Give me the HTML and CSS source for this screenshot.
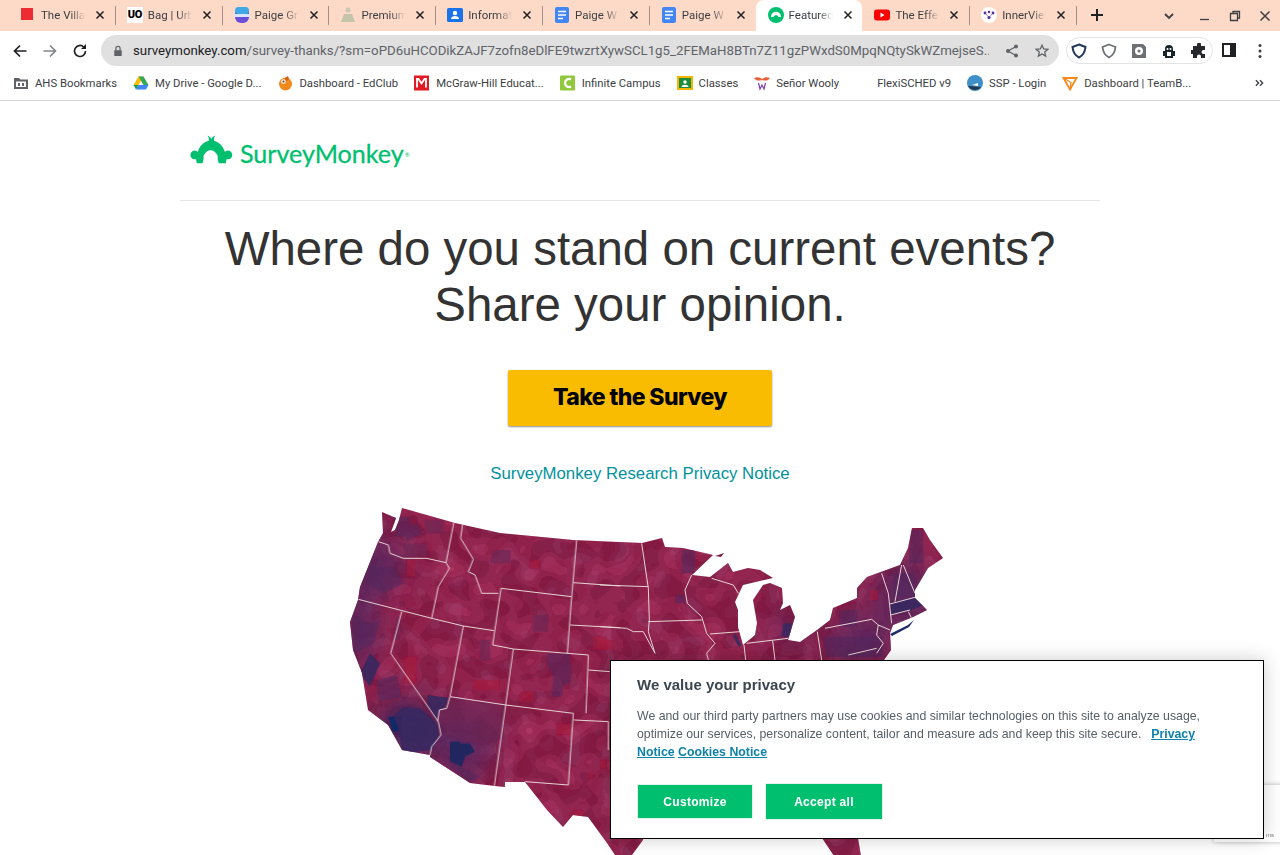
FILE: index.html
```html
<!DOCTYPE html>
<html lang="en">
<head>
<meta charset="utf-8">
<title>SurveyMonkey</title>
<link rel="stylesheet" href="styles.css">
</head>
<body>
<svg class="defs" width="0" height="0">
  <symbol id="x" viewBox="0 0 10 10"><path d="M1.5 1.5l7 7M8.5 1.5l-7 7"/></symbol>
  <symbol id="doc" viewBox="0 0 16 16"><rect x="1" y="0" width="14" height="16" rx="2" fill="#4285f4"/><path d="M4 4.5h8M4 8h8M4 11.500h5" stroke="#fff" stroke-width="1.500"/></symbol>
</svg>

<div class="tabstrip">
  <div class="tab"><svg class="fav" viewBox="0 0 16 16"><rect x="1" y="1" width="12" height="12" fill="#ed2b32"/></svg><span class="title">The Villa</span><svg class="close"><use href="#x"/></svg></div>
  <div class="tab"><span class="fav uo">UO</span><span class="title">Bag | Urban</span><svg class="close"><use href="#x"/></svg></div>
  <div class="tab"><svg class="fav" viewBox="0 0 16 16"><rect x="1" y="0" width="14" height="16" rx="6" fill="#6a4fd8"/><rect x="1" y="0" width="14" height="7" rx="3.500" fill="#3fa9e8"/><rect x="0" y="7" width="16" height="3" fill="#d8e6fa"/></svg><span class="title">Paige Gr</span><svg class="close"><use href="#x"/></svg></div>
  <div class="tab"><svg class="fav" viewBox="0 0 16 16"><circle cx="8" cy="3" r="2.500" fill="#c9c8b4"/><path d="M4 7h8l3 8H1z" fill="#c3c5ab"/></svg><span class="title">Premium</span><svg class="close"><use href="#x"/></svg></div>
  <div class="tab"><svg class="fav" viewBox="0 0 16 16"><rect x="0" y="1" width="16" height="14" rx="1.500" fill="#1a73e8"/><circle cx="8" cy="6" r="2.200" fill="#fff"/><path d="M4 12c0-4 8-4 8 0z" fill="#fff"/></svg><span class="title">Information</span><svg class="close"><use href="#x"/></svg></div>
  <div class="tab"><svg class="fav"><use href="#doc"/></svg><span class="title">Paige W</span><svg class="close"><use href="#x"/></svg></div>
  <div class="tab"><svg class="fav"><use href="#doc"/></svg><span class="title">Paige W</span><svg class="close"><use href="#x"/></svg></div>
  <div class="tab active"><svg class="fav" viewBox="0 0 16 16"><circle cx="8" cy="8" r="8" fill="#00bf6f"/><path d="M3 10c0-7 10-7 10 0l-2.500 0c-.5-2.500-4.500-2.500-5 0z" fill="#fff"/></svg><span class="title">Featured</span><svg class="close"><use href="#x"/></svg></div>
  <div class="tab"><svg class="fav" viewBox="0 0 16 16"><rect x="0" y="2.500" width="16" height="11" rx="3" fill="#f00"/><path d="M6.500 5.500v5l4-2.500z" fill="#fff"/></svg><span class="title">The Effect</span><svg class="close"><use href="#x"/></svg></div>
  <div class="tab"><svg class="fav" viewBox="0 0 16 16"><circle cx="8" cy="8" r="8" fill="#fff"/><circle cx="4" cy="6" r="1.400" fill="#5b2a9d"/><circle cx="12" cy="6" r="1.400" fill="#5b2a9d"/><circle cx="8" cy="5" r="1.200" fill="#5b2a9d"/><circle cx="8" cy="10.500" r="1.500" fill="#5b2a9d"/><path d="M4 6l4 4.500L12 6" stroke="#5b2a9d" fill="none" stroke-width=".6"/></svg><span class="title">InnerView</span><svg class="close"><use href="#x"/></svg></div>
  <svg class="newtab" viewBox="0 0 12 12"><path d="M6 0v12M0 6h12"/></svg>
  <div class="winbtns">
    <svg viewBox="0 0 12 12" class="chev"><path d="M2 4l4 4 4-4"/></svg>
    <svg viewBox="0 0 12 12" class="min"><path d="M1 9.500h9"/></svg>
    <svg viewBox="0 0 12 12" class="res"><path d="M4 3.500V1.500h6.500V8H8.500M1.500 3.500h7v7h-7z"/></svg>
    <svg viewBox="0 0 12 12" class="cls"><path d="M1.500 1.500l9 9M10.500 1.500l-9 9"/></svg>
  </div>
</div>

<div class="toolbar">
  <svg class="nav" viewBox="0 0 16 16"><path d="M14.500 8H2.500M8 2.500L2.500 8 8 13.500"/></svg>
  <svg class="nav off" viewBox="0 0 16 16"><path d="M1.500 8h12M8 2.500L13.500 8 8 13.500"/></svg>
  <svg class="nav" viewBox="0 0 16 16"><path d="M13.500 8a5.500 5.500 0 1 1-1.700-4"/><path class="solid" d="M14 1v5H9z"/></svg>
  <div class="omnibox">
    <svg class="lock" viewBox="0 0 12 14"><path d="M1.500 6h9v7h-9z"/><path class="hollow" d="M3.500 6V4a2.500 2.500 0 0 1 5 0v2"/></svg>
    <div class="url"><span class="host">surveymonkey.com</span>/survey-thanks/?sm=oPD6uHCODikZAJF7zofn8eDlFE9twzrtXywSCL1g5_2FEMaH8BTn7Z11gzPWxdS0MpqNQtySkWZmejseS...</div>
    <svg class="omni-ic" viewBox="0 0 14 14"><circle cx="11" cy="2.500" r="2"/><circle cx="3" cy="7" r="2"/><circle cx="11" cy="11.500" r="2"/><path class="line" d="M11 2.500L3 7l8 4.500"/></svg>
    <svg class="omni-ic star" viewBox="0 0 14 14"><path d="M7 1.200l1.700 3.800 4.100.4-3.100 2.700.9 4L7 10l-3.600 2.100.9-4-3.100-2.700 4.100-.4z"/></svg>
  </div>
  <div class="extbox">
    <svg viewBox="0 0 16 16" class="ext"><path d="M8 1.500l6.500 2.500C14 9 12 12.500 8 14.500 4 12.500 2 9 1.500 4z" fill="#fff" stroke="#23395b" stroke-width="2"/></svg>
    <svg viewBox="0 0 16 16" class="ext"><path d="M8 1.500l6.500 2.500C14 9 12 12.500 8 14.500 4 12.500 2 9 1.500 4z" fill="#fff" stroke="#6d7177" stroke-width="1.800"/></svg>
    <svg viewBox="0 0 16 16" class="ext"><path d="M1 1h11l3 3v11H1z" fill="#6d7072"/><circle cx="8" cy="8" r="4" fill="#fff"/><circle cx="8" cy="8" r="1.500" fill="#6d7072"/></svg>
    <svg viewBox="0 0 16 16" class="ext"><path d="M4 15V6a4 4 0 0 1 8 0v9z" fill="#16252c"/><path d="M2 8h2v5H2zM12 8h2v5h-2z" fill="#16252c"/><circle cx="6.500" cy="6" r="1" fill="#fff"/><circle cx="9.500" cy="6" r="1" fill="#fff"/><rect x="6" y="9" width="4" height="4" fill="#fff"/></svg>
    <svg viewBox="0 0 16 16" class="ext"><path d="M6 1.500a2 2 0 0 1 4 0V3h4v4h-1.500a2 2 0 0 0 0 4H14v4h-4v-1.500a2 2 0 0 0-4 0V15H2v-4H.8a2 2 0 0 1 0-4H2V3h4z" fill="#26282b"/></svg>
  </div>
  <svg class="sidepanel" viewBox="0 0 14 14"><path d="M0 0h14v14H0z" fill="#202124"/><path d="M2 2h6v10H2z" fill="#fff"/></svg>
  <svg class="kebab" viewBox="0 0 4 16"><circle cx="2" cy="2.500" r="1.500"/><circle cx="2" cy="8" r="1.500"/><circle cx="2" cy="13.500" r="1.500"/></svg>
</div>

<div class="bookmarks">
  <div class="bm"><svg class="bic" viewBox="0 0 16 16"><path d="M1 3h5l1.500 1.500H15V14H1z" fill="#5f6368"/><path d="M3 6.500h10V12H3z" fill="#fff"/><path d="M5 8h2v3H5zM9 8h2v3H9z" fill="#5f6368"/></svg>AHS Bookmarks</div>
  <div class="bm"><svg class="bic" viewBox="0 0 16 16"><path d="M5.500 1.500h5L5.500 10H.5z" fill="#fbbc04"/><path d="M10.500 1.500l5 8.500h-5L5.500 1.500z" fill="#34a853"/><path d="M3 14.500L5.500 10h10l-2.500 4.500z" fill="#4285f4"/><path d="M.5 10h5L3 14.500z" fill="#0f9d58"/></svg>My Drive - Google D...</div>
  <div class="bm"><svg class="bic" viewBox="0 0 16 16"><circle cx="8.500" cy="9" r="6.500" fill="#f08a1d"/><path d="M8 3l3-2 1 3-4 3z" fill="#d85f0e"/><circle cx="6.500" cy="6.500" r="2.200" fill="#fff"/><circle cx="6.500" cy="6.500" r="1" fill="#5a2e0c"/></svg>Dashboard - EdClub</div>
  <div class="bm"><svg class="bic" viewBox="0 0 16 16"><rect width="15" height="15" y=".5" fill="#e21a23"/><path d="M3 12.500V4h1.500l3 4.500 3-4.500H12v8.500" fill="none" stroke="#fff" stroke-width="1.800"/></svg>McGraw-Hill Educat...</div>
  <div class="bm"><svg class="bic" viewBox="0 0 16 16"><rect width="15" height="15" y=".5" rx="1" fill="#92c83e"/><path d="M11 4.500a4 4 0 1 0 0 7" fill="none" stroke="#fff" stroke-width="2.200"/></svg>Infinite Campus</div>
  <div class="bm"><svg class="bic" viewBox="0 0 16 16"><rect y="1" width="16" height="14" fill="#f4b400"/><rect x="2" y="3" width="12" height="10" fill="#1e8e3e"/><circle cx="8" cy="7" r="1.700" fill="#fff"/><path d="M4.500 12c0-3 7-3 7 0z" fill="#fff"/></svg>Classes</div>
  <div class="bm"><svg class="bic" viewBox="0 0 16 16"><path d="M0 3c3-1 5-1 8 1 3-2 5-2 8-1-2 3-5 3-8 2-3 1-6 1-8-2z" fill="#e9603a"/><path d="M4.500 8l1.500 6 2-4 2 4 1.500-6" fill="none" stroke="#7a3fa8" stroke-width="1.200"/></svg>Señor Wooly</div>
  <div class="bm"><span class="bic"></span>FlexiSCHED v9</div>
  <div class="bm"><svg class="bic" viewBox="0 0 16 16"><circle cx="8" cy="8" r="8" fill="#3f8fc9"/><path d="M1 11c4 0 9 1 13 1-3 4-10 4-13-1z" fill="#23384d"/><path d="M5 10l6-2v3z" fill="#fff"/></svg>SSP - Login</div>
  <div class="bm"><svg class="bic" viewBox="0 0 16 16"><path d="M1.500 3h13L8 14.500z" fill="none" stroke="#f58a1f" stroke-width="1.800"/><path d="M1.500 3L9 7.500 8 14.500" fill="none" stroke="#f58a1f" stroke-width="1.300"/></svg>Dashboard | TeamB...</div>
  <svg class="more" viewBox="0 0 10 8"><path d="M1 1l3 3-3 3M5.500 1l3 3-3 3"/></svg>
</div>

<main class="page">
  <header class="brand">
    <svg class="mark" viewBox="60 40 130 90"><path d="M80 127l-2-12a13 13 0 1 1 5-22c8-22 20-30 32-32 2-6 0-11-3-16 6 3 9 6 11 11 2-5 5-8 11-11-2 5-4 11-3 16 12 2 24 10 32 32a13 13 0 1 1 5 22l-2 12h-21c-2-8-4-14-3-21-5-12-14-17-21-17s-16 5-21 17c1 7-1 13-3 21z"/></svg>
    <div class="wordmark">SurveyMonkey<span class="reg">®</span></div>
  </header>
  <h1 class="headline">Where do you stand on current events?<br>Share your opinion.</h1>
  <a class="cta">Take the Survey</a>
  <a class="privacy">SurveyMonkey Research Privacy Notice</a>
  <svg class="map" viewBox="340 500 620 355">
    <defs>
      <clipPath id="us"><use href="#land"/><use href="#florida"/></clipPath>
      <filter id="blur" x="-50%" y="-50%" width="200%" height="200%"><feGaussianBlur stdDeviation="14"/></filter>
      <filter id="soft" x="-20%" y="-20%" width="140%" height="140%"><feGaussianBlur stdDeviation=".7"/></filter>
      <filter id="mottleA" x="0" y="0" width="100%" height="100%">
        <feTurbulence type="fractalNoise" baseFrequency=".06" numOctaves="1" seed="4"/>
        <feColorMatrix values="0 0 0 0 .36  0 0 0 0 .14  0 0 0 0 .34  1.500 0 0 0 -.45"/>
        <feComponentTransfer><feFuncA type="discrete" tableValues="0 .08 .2 .35"/></feComponentTransfer>
      </filter>
      <filter id="mottleB" x="0" y="0" width="100%" height="100%">
        <feTurbulence type="fractalNoise" baseFrequency=".05" numOctaves="1" seed="11"/>
        <feColorMatrix values="0 0 0 0 .66  0 0 0 0 .07  0 0 0 0 .20  1.500 0 0 0 -.45"/>
        <feComponentTransfer><feFuncA type="discrete" tableValues="0 .15 .3 .5"/></feComponentTransfer>
      </filter>
      <path id="land" d="M402 508L455 523 500 533 573 540 642 543 662 538 665 547 683 548 713 555 692 575 710 577 728 563 733 572 748 568 760 570 773 578 743 585 735 602 738 610 738 627 743 645 755 635 757 623 753 600 763 585 770 583 782 588 783 603 780 610 790 605 795 617 788 640 800 642 817 630 830 620 833 608 857 598 857 588 867 577 900 565 908 548 912 528 923 528 930 540 943 558 928 568 915 590 915 598 927 610 913 617 893 625 890 633 891 650 884 660 870 700 800 760 660 780 643 840 632 855 615 855 607 843 588 817 573 815 563 827 547 810 525 782 505 782 505 787 495 786 470 783 430 757 430 755 402 750 388 725 368 710 362 673 353 650 350 622 358 600 360 587 378 542 383 533 382 512 396 518 394 524 391 532 395 530 399 520z"/>
      <path id="florida" d="M822 838H858L861 856H834z"/>
    </defs>
    <g clip-path="url(#us)">
      <rect class="base" x="340" y="500" width="620" height="355"/>
      <rect class="tex" x="340" y="500" width="620" height="355" filter="url(#mottleA)"/>
      <rect class="tex" x="340" y="500" width="620" height="355" filter="url(#mottleB)"/>
      <g filter="url(#blur)">
        <ellipse class="bl1" cx="358" cy="615" rx="18" ry="60"/>
        <ellipse class="bl1" cx="382" cy="560" rx="22" ry="26"/>
        <ellipse class="bl2" cx="405" cy="725" rx="24" ry="22"/>
        <ellipse class="bl1" cx="460" cy="745" rx="34" ry="32"/>
        <ellipse class="bl1" cx="905" cy="595" rx="32" ry="32"/>
        <ellipse class="bl1" cx="860" cy="640" rx="34" ry="22"/>
        <ellipse class="bl1" cx="790" cy="630" rx="14" ry="16"/>
      </g>
      <g transform="translate(340 500) scale(.3333)" filter="url(#soft)">
        <path class="p1" d="M160 50h50v60h-40zM190 80l40-10 20 30-50 20z"/>
        <path class="p2" d="M145 650h40l-3 40-22 5z"/>
        <path class="p3" d="M190 620l50 5 50 45 5 40-20 40-90 10-5-60-20-50z"/>
        <path class="p3" d="M262 585l63 8-5 32-22 5-6 30-30-45z"/>
        <path class="p4" d="M330 725h30v5h30l15 25-30 15-10 30-35-15z"/>
        <path class="p1" d="M320 790l45 10 55 30-30 20z"/>
        <path class="p5" d="M300 635l30-45 165 25-5 100-70 20-100-30z"/>
        <path class="p3" d="M60 520l30-60 30 30-30 70z"/>
        <path class="p1" d="M90 200h70l30 50-60 30-50-30z"/>
        <path class="p1" d="M40 340l40 30 40-10-20 70-60 30z"/>
        <path class="p1" d="M110 540l60-15 15 65-70 15z"/>
        <path class="p1" d="M620 460h70v30h5l-5 60-20 5-5 35h-30l5-60-20-40z"/>
        <path class="p5" d="M420 420h30v60l-30 5z"/>
        <path class="p5" d="M580 345h45v50h-45z"/>
        <path class="p5" d="M460 150h50v40h-60z"/>
        <path class="p5" d="M190 130h70v40h-70z"/>
        <path class="p5" d="M255 60h55v40h-55z"/>
        <path class="p5" d="M170 350h12v70h-25z"/>
        <path class="r1" d="M570 180h30v25h-30zM200 180h25v50h-25z"/>
        <path class="r1" d="M190 470h40v80h-35z"/>
        <path class="r1" d="M540 575h40v30h-40zM650 670h40v35h-40zM745 815h15v20h-15zM780 780h20v25h-20z"/>
        <path class="r1" d="M760 410h40v40h-40zM700 930h30v20h-30z"/>
        <path class="r1" d="M400 540h80v30h-80z"/>
      </g>
      <g transform="translate(600 510) scale(.3333)" filter="url(#soft)">
        <path class="p1" d="M245 120h40v70h-40zM225 255h30v25h-30z"/>
        <path class="p3" d="M405 370l20 35-10 5-15-30zM550 340h25v40h-30z"/>
        <path class="p3" d="M870 280l75-20 25 25-35 15-65 15z"/>
        <path class="p1" d="M670 380h180v60H680zM720 300h50v50h-50zM880 190h60v70h-60zM930 60h40v100h-40z"/>
        <path class="r1" d="M0 390h40v30H0zM810 240h25v30h-25z"/>
      </g>
      <g class="lines" transform="translate(340 500) scale(.3333)">
        <path d="M115 125l30 10 5 25 40 15h70l58 13"/>
        <path d="M342 65l-24 123 10 17-33 55-20 95"/>
        <path d="M368 70l-6 45 38 63-15 37 20 10 20 55h50"/>
        <path d="M483 265l212 25M710 120l-15 170-13 170"/>
        <path d="M483 265l-25 170 62 12 225 18-7 175"/>
        <path d="M55 298l220 57 95 23 92 14"/>
        <path d="M185 335l-33 125 143 205 8 40-28 35-5 25"/>
        <path d="M370 378l-40 212 167 25 203 25"/>
        <path d="M330 590l-10 35-22 5-5 35"/>
        <path d="M497 615l-34 243M520 447l-23 168M700 640l-15 215-130-10"/>
        <path d="M702 660l103 5v85M700 248l140 10M690 375l150 8M745 510l65 5"/>
      </g>
      <g class="lines" transform="translate(600 510) scale(.3333)">
        <path d="M125 100l20 135 3 95-3 35 20 65M0 225l145 5M0 350l80 5 20 10h30l35 65"/>
        <path d="M145 335l160-5M275 195l-20 45 7 40 43 40 15 50 25 30-25 30 5 20"/>
        <path d="M335 205l65 20 15 25M330 372l90-7M432 405l5 45M518 392l7 58M440 400l125-15M652 365l13 85"/>
        <path d="M675 355l140-27 20 17 35 15M835 345l-5 30 20 25-20 30M845 190l20 60 10 90"/>
        <path d="M905 165l-20 110M910 165l35 85M870 282l75-20M872 315l58-15M925 305l10 20M745 435l85-20"/>
      </g>
    </g>
    <path class="li" d="M890 634l18-9 6-5-5 7-17 9z"/>
    <path class="isl" d="M715 556l9-3-3 4z"/>
  </svg>
</main>

<aside class="recaptcha"><span class="rc">ms</span></aside>

<section class="consent">
  <h2 class="c-title">We value your privacy</h2>
  <p class="c-text">We and our third party partners may use cookies and similar technologies on this site to analyze usage, optimize our services, personalize content, tailor and measure ads and keep this site secure. &nbsp;<a class="first">Privacy Notice</a> <a>Cookies Notice</a></p>
  <div class="c-btns"><button class="c-btn">Customize</button><button class="c-btn accept">Accept all</button></div>
</section>
</body>
</html>
```
FILE: styles.css
```css
* { box-sizing: border-box; }
html, body { margin: 0; height: 855px; overflow: hidden; background: #fff; }
body { font-family: Roboto, "Liberation Sans", sans-serif; color: #202124; }
.defs { position: absolute; }

.tabstrip { height: 31px; background: #fdd9c7; display: flex; align-items: center; padding-left: 8px; }
.tab { width: 106.8px; height: 31px; display: flex; align-items: center; padding: 0 8px 2px 12px; position: relative; font-size: 11.500px; color: #3c4043; }
.tab::after { content: ""; position: absolute; right: -1px; top: 6px; height: 19px; width: 1px; background: #a39187; }
.tab.active { background: #fff; border-radius: 8px 8px 0 0; color: #3c4043; }
.tab.active::after { display: none; }
.tab:nth-child(7)::after { display: none; }
.fav { width: 16px; height: 16px; flex: none; margin-right: 5px; }
.uo { background: #fff; color: #000; font-weight: 900; font-size: 11px; line-height: 16px; text-align: center; letter-spacing: -.5px; }
.title { width: 49px; flex: none; overflow: hidden; white-space: nowrap; -webkit-mask-image: linear-gradient(90deg, #000 60%, transparent 90%); mask-image: linear-gradient(90deg, #000 60%, transparent 90%); }
.close { width: 10px; height: 10px; margin-left: 5px; flex: none; fill: none; stroke: #202124; stroke-width: 1.500; }
.newtab { width: 12px; height: 12px; margin-left: 15px; fill: none; stroke: #202124; stroke-width: 2; margin-bottom: 2px; }
.winbtns { margin-left: auto; display: flex; align-items: center; gap: 18px; padding-right: 9px; }
.winbtns svg { width: 12px; height: 12px; fill: none; stroke: #3c4043; stroke-width: 1.300; }
.winbtns .chev { margin-right: 6px; stroke-width: 1.800; }
.winbtns .cls { stroke-width: 1.500; }

.toolbar { height: 39px; background: #fff; display: flex; align-items: center; padding-left: 12px; }
.nav { width: 16px; height: 16px; margin-right: 14px; fill: none; stroke: #202124; stroke-width: 1.700; }
.nav.off { stroke: #80868b; }
.nav .solid { fill: #202124; stroke: none; }
.omnibox { width: 958px; height: 31px; margin-left: -1px; border-radius: 16px; background: #e0e0e0; display: flex; align-items: center; padding: 0 9px 0 12px; }
.lock { width: 10px; height: 12px; flex: none; fill: #5f6368; }
.lock .hollow { fill: none; stroke: #5f6368; stroke-width: 1.500; }
.url { width: 856px; margin-left: 10px; flex: none; white-space: nowrap; overflow: hidden; font-size: 13.250px; color: #5f6368; }
.host { color: #202124; }
.omni-ic { width: 14px; height: 14px; margin-left: 16px; flex: none; fill: #5f6368; }
.omni-ic.star { fill: none; stroke: #5f6368; stroke-width: 1.300; }
.omni-ic .line { fill: none; stroke: #5f6368; stroke-width: 1.300; }
.extbox { width: 147px; height: 27px; margin-left: 7px; border: 1px solid #e3e3e3; border-radius: 14px; display: flex; align-items: center; justify-content: space-between; padding: 0 5px 0 4px; }
.ext { width: 16px; height: 16px; flex: none; }
.sidepanel { width: 14px; height: 14px; margin: 0 0 2px 9px; }
.kebab { width: 4px; height: 16px; margin-left: 22px; fill: #3c4043; }

.bookmarks { height: 31px; background: #fff; border-bottom: 1px solid #d6d6d6; display: flex; align-items: center; padding: 0 0 4px 5px; }
.bm { display: flex; align-items: center; gap: 6px; padding: 0 8px; font-size: 11.300px; color: #3c4043; white-space: nowrap; }
.bic { width: 16px; height: 16px; flex: none; display: block; }
.more { width: 9px; height: 8px; margin-left: auto; margin-right: 16px; fill: none; stroke: #3c4043; stroke-width: 1.500; }

.page { width: 920px; margin: 0 auto; display: flex; flex-direction: column; align-items: center; font-family: "Liberation Sans", Arial, sans-serif; }
.brand { width: 100%; height: 100px; border-bottom: 1px solid #e6e6e6; display: flex; align-items: flex-start; padding: 32px 0 0 10px; }
.mark { width: 44px; height: 32px; flex: none; fill: #00bf6f; }
.wordmark { font-family: Lato, sans-serif; font-size: 25.100px; line-height: 36px; color: #00bf6f; font-weight: 400; -webkit-text-stroke: .3px #00bf6f; margin-left: 6px; margin-top: 2px; }
.reg { font-size: 6px; -webkit-text-stroke: 0; vertical-align: 6px; margin-left: 1px; }
.headline { margin: 20px 0 0; font-weight: 400; font-size: 47.450px; line-height: 56px; color: #333; text-align: center; white-space: nowrap; }
.cta { margin-top: 37px; width: 264px; height: 56px; background: #f9bc00; border-radius: 2px; box-shadow: 0 1px 2px rgba(0,0,0,.45); color: #000; font: 800 23px/54px Inter, "Liberation Sans", sans-serif; letter-spacing: -.6px; text-align: center; }
.privacy { margin-top: 38px; font-size: 16.800px; line-height: 20px; color: #00929c; }
.map { width: 620px; height: 355px; margin: 16px 0 0 20px; flex: none; display: block; }

.base { fill: #841a42; }
.bl1 { fill: #4a2763; opacity: .75; }
.bl2 { fill: #25255f; }
.p1 { fill: #54285f; opacity: .55; }
.p2 { fill: #0b2a68; }
.p3 { fill: #37275f; opacity: .9; }
.p4 { fill: #23285f; }
.p5 { fill: #6a2455; opacity: .6; }
.r1 { fill: #ab1236; opacity: .5; }
.lines path { fill: none; stroke: #e6d5d5; stroke-width: 3; stroke-linejoin: round; }
.li { fill: #1f2a6a; }
.isl { fill: #7d2049; }

.recaptcha { position: fixed; left: 1214px; top: 785px; width: 70px; height: 57px; background: #fff; box-shadow: 0 0 5px rgba(0,0,0,.3); }
.rc { position: absolute; left: 52px; top: 47px; font: 6px "Liberation Sans", sans-serif; color: #777; }

.consent { position: fixed; left: 610px; top: 660px; width: 654px; height: 179px; background: #fff; border: 1px solid #000; box-shadow: 0 0 18px rgba(0,0,0,.2); padding: 14px 26px 0; font-family: "Liberation Sans", Arial, sans-serif; }
.c-title { margin: 0; font-size: 15px; line-height: 20px; font-weight: 700; color: #3c4650; }
.c-text { margin: 12px 0 0; max-width: 570px; font-size: 12.320px; line-height: 18px; color: #565f66; }
.c-text a { color: #0f82ab; font-weight: 700; text-decoration: underline; }
.c-text .first { margin-left: 3px; }
.c-btns { display: flex; align-items: center; gap: 12px; margin-top: 22px; height: 37px; }
.c-btn { width: 116px; height: 35px; border: 1px solid #e4f5ee; background: #00bf6f; color: #fff; font: 700 12px "Liberation Sans", sans-serif; letter-spacing: .3px; padding: 0; }
.c-btn.accept { width: 118px; height: 37px; }
```
